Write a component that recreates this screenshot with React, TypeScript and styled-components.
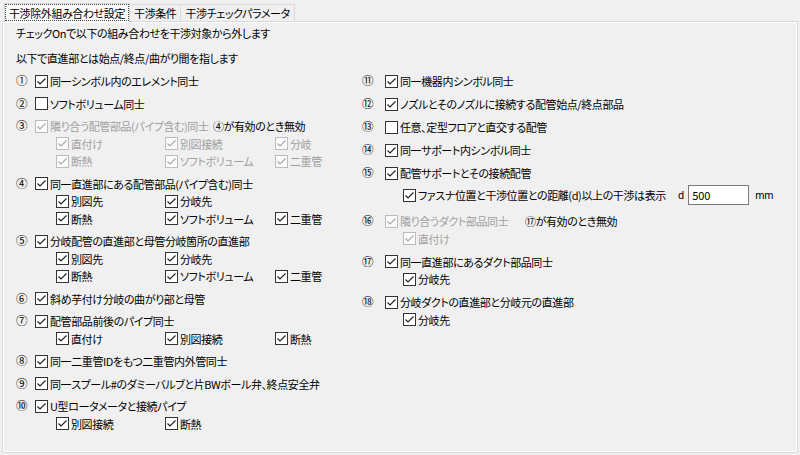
import * as React from "react";
import styled, { createGlobalStyle, css } from "styled-components";

const GlobalStyle = createGlobalStyle`
  html, body {
    margin: 0;
    background: #f0f0f0;
  }
  body {
    font-family: "Noto Sans CJK JP", "Noto Sans", sans-serif;
    font-size: 11px;
    letter-spacing: -0.4px;
    color: #000;
    font-feature-settings: "palt";
  }
`;

const Window = styled.div`
  width: 800px;
  height: 455px;
  padding-top: 3px;
  box-sizing: border-box;
`;

const TabStrip = styled.div`
  display: flex;
  align-items: flex-end;
  height: 18px;
  padding-left: 4px;
`;

const Tab = styled.div<{ $active?: boolean }>`
  height: 16px;
  line-height: 16px;
  padding: 0 4px;
  border: 1px solid #d9d9d9;
  border-bottom: none;
  border-left: none;
  background: #f0f0f0;
  white-space: nowrap;
  ${(p) =>
    p.$active &&
    css`
      position: relative;
      z-index: 1;
      height: 18px;
      line-height: 18px;
      margin-bottom: -1px;
      border-left: 1px solid #d9d9d9;
      background: #fbfbfb;
      outline: 1px dotted #444;
      outline-offset: -2px;
    `}
`;

const Panel = styled.div`
  margin: 0 2px;
  height: 432px;
  box-sizing: border-box;
  border: 1px solid #dadada;
  box-shadow: inset 0 0 0 1px #fff;
  padding: 3px 0 0 13px;
`;

const IntroBlock = styled.div`
  display: flex;
  flex-direction: column;
  gap: 7.5px;
`;

const Intro = styled.div`
  height: 17.5px;
  line-height: 17.5px;
  white-space: nowrap;
`;

const Columns = styled.div`
  display: grid;
  grid-template-columns: 346px 1fr;
  margin-top: 4.75px;
`;

const Column = styled.div<{ $gap: number }>`
  display: flex;
  flex-direction: column;
  gap: ${(p) => p.$gap}px;
`;

const Group = styled.div`
  display: flex;
  flex-direction: column;
`;

const MainRow = styled.div`
  display: flex;
  align-items: center;
  height: 17.5px;
  white-space: nowrap;
`;

const Num = styled.span<{ $w: number }>`
  width: ${(p) => p.$w}px;
  flex: none;
  font-size: 11.5px;
  letter-spacing: 0;
  line-height: 1;
`;

const Label = styled.span<{ $disabled?: boolean; $w?: number }>`
  margin-left: 2px;
  color: ${(p) => (p.$disabled ? "#a0a0a0" : "#000")};
  ${(p) => p.$w && `min-width: ${p.$w}px; flex: none;`}
`;

const Hint = styled.span`
  margin-left: 4px;
  color: #000;
`;

const SubRow = styled.div<{ $indent: number }>`
  display: grid;
  grid-template-columns: 109px 110px auto;
  align-items: center;
  height: 17.5px;
  padding-left: ${(p) => p.$indent}px;
  white-space: nowrap;
`;

const SubItem = styled.div`
  display: flex;
  align-items: center;
`;

const InputRow = styled.div<{ $indent: number }>`
  display: flex;
  align-items: center;
  height: 21px;
  margin: 3px 0 1px;
  padding-left: ${(p) => p.$indent}px;
  white-space: nowrap;
`;

const Unit = styled.span<{ $ml: number }>`
  margin-left: ${(p) => p.$ml}px;
  font-family: "Liberation Sans", Arial, sans-serif;
  font-size: 11px;
  letter-spacing: 0;
`;

const TextBox = styled.div`
  width: 61px;
  height: 20px;
  box-sizing: border-box;
  margin-left: 4px;
  border: 1px solid #7a7a7a;
  background: #fff;
  padding-left: 3px;
  line-height: 18px;
  font-size: 11px;
  letter-spacing: 0;
`;

const Box = styled.span<{ $disabled?: boolean }>`
  display: inline-flex;
  flex: none;
  width: 13px;
  height: 13px;
  box-sizing: border-box;
  border: 1px solid ${(p) => (p.$disabled ? "#bcbcbc" : "#333")};
  background: ${(p) => (p.$disabled ? "#fcfcfc" : "#fff")};
`;

function Check({ checked, disabled }: { checked: boolean; disabled?: boolean }) {
  return (
    <Box $disabled={disabled}>
      {checked && (
        <svg width="11" height="11" viewBox="0 0 11 11">
          <polyline
            points="1.5,5.5 4,8 9.5,2.5"
            fill="none"
            stroke={disabled ? "#a8a8a8" : "#222"}
            strokeWidth="1.2"
          />
        </svg>
      )}
    </Box>
  );
}

type Sub = { label: string; checked: boolean };
type Item = {
  num: string;
  label: string;
  checked: boolean;
  disabled?: boolean;
  hint?: string;
  subs?: Sub[][];
  extra?: boolean;
};

const on = (label: string): Sub => ({ label, checked: true });

const leftItems: Item[] = [
  { num: "①", label: "同一シンボル内のエレメント同士", checked: true },
  { num: "②", label: "ソフトボリューム同士", checked: false },
  {
    num: "③",
    label: "隣り合う配管部品(パイプ含む)同士",
    checked: true,
    disabled: true,
    hint: "④が有効のとき無効",
    subs: [
      [on("直付け"), on("別図接続"), on("分岐")],
      [on("断熱"), on("ソフトボリューム"), on("二重管")],
    ],
  },
  {
    num: "④",
    label: "同一直進部にある配管部品(パイプ含む)同士",
    checked: true,
    subs: [
      [on("別図先"), on("分岐先")],
      [on("断熱"), on("ソフトボリューム"), on("二重管")],
    ],
  },
  {
    num: "⑤",
    label: "分岐配管の直進部と母管分岐箇所の直進部",
    checked: true,
    subs: [
      [on("別図先"), on("分岐先")],
      [on("断熱"), on("ソフトボリューム"), on("二重管")],
    ],
  },
  { num: "⑥", label: "斜め芋付け分岐の曲がり部と母管", checked: true },
  {
    num: "⑦",
    label: "配管部品前後のパイプ同士",
    checked: true,
    subs: [[on("直付け"), on("別図接続"), on("断熱")]],
  },
  { num: "⑧", label: "同一二重管IDをもつ二重管内外管同士", checked: true },
  { num: "⑨", label: "同一スプール#のダミーバルブと片BWボール弁、終点安全弁", checked: true },
  {
    num: "⑩",
    label: "U型ロータメータと接続パイプ",
    checked: true,
    subs: [[on("別図接続"), on("断熱")]],
  },
];

const rightItems: Item[] = [
  { num: "⑪", label: "同一機器内シンボル同士", checked: true },
  { num: "⑫", label: "ノズルとそのノズルに接続する配管始点/終点部品", checked: true },
  { num: "⑬", label: "任意、定型フロアと直交する配管", checked: false },
  { num: "⑭", label: "同一サポート内シンボル同士", checked: true },
  { num: "⑮", label: "配管サポートとその接続配管", checked: true, extra: true },
  {
    num: "⑯",
    label: "隣り合うダクト部品同士",
    checked: true,
    disabled: true,
    hint: "⑰が有効のとき無効",
    subs: [[on("直付け")]],
  },
  { num: "⑰", label: "同一直進部にあるダクト部品同士", checked: true, subs: [[on("分岐先")]] },
  { num: "⑱", label: "分岐ダクトの直進部と分岐元の直進部", checked: true, subs: [[on("分岐先")]] },
];

function OptionList({
  items,
  numWidth,
  labelWidth,
  indent,
  gap,
}: {
  items: Item[];
  numWidth: number;
  labelWidth: number;
  indent: number;
  gap: number;
}) {
  return (
    <Column $gap={gap}>
      {items.map((it) => (
        <Group key={it.num}>
          <MainRow>
            <Num $w={numWidth}>{it.num}</Num>
            <Check checked={it.checked} disabled={it.disabled} />
            <Label $disabled={it.disabled} $w={it.hint ? labelWidth : undefined}>
              {it.label}
            </Label>
            {it.hint && <Hint>{it.hint}</Hint>}
          </MainRow>
          {it.subs?.map((row, i) => (
            <SubRow key={i} $indent={indent}>
              {row.map((s) => (
                <SubItem key={s.label}>
                  <Check checked={s.checked} disabled={it.disabled} />
                  <Label $disabled={it.disabled}>{s.label}</Label>
                </SubItem>
              ))}
            </SubRow>
          ))}
          {it.extra && (
            <InputRow $indent={indent}>
              <Check checked />
              <Label $w={256}>ファスナ位置と干渉位置との距離(d)以上の干渉は表示</Label>
              <Unit $ml={4}>d</Unit>
              <TextBox>500</TextBox>
              <Unit $ml={6}>mm</Unit>
            </InputRow>
          )}
        </Group>
      ))}
    </Column>
  );
}

export default function App() {
  return (
    <>
      <GlobalStyle />
      <Window>
        <TabStrip>
          <Tab $active>干渉除外組み合わせ設定</Tab>
          <Tab>干渉条件</Tab>
          <Tab>干渉チェックパラメータ</Tab>
        </TabStrip>
        <Panel>
          <IntroBlock>
            <Intro>チェックOnで以下の組み合わせを干渉対象から外します</Intro>
            <Intro>以下で直進部とは始点/終点/曲がり間を指します</Intro>
          </IntroBlock>
          <Columns>
            <OptionList items={leftItems} numWidth={19} labelWidth={159} indent={40} gap={5} />
            <OptionList items={rightItems} numWidth={23} labelWidth={121} indent={41} gap={5.5} />
          </Columns>
        </Panel>
      </Window>
    </>
  );
}
